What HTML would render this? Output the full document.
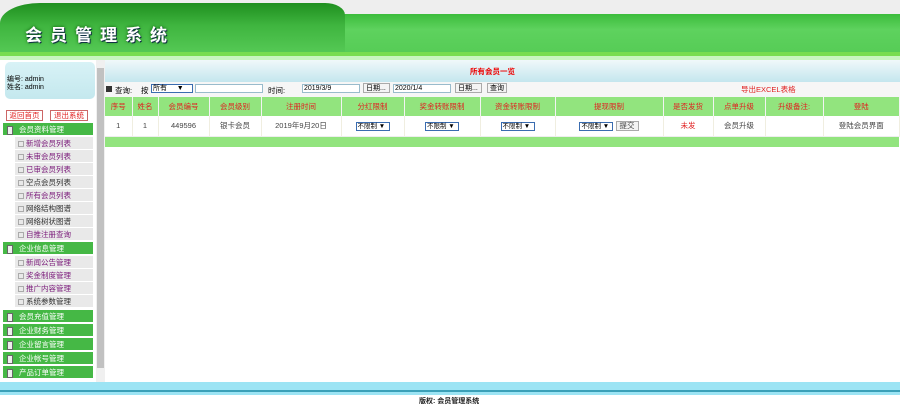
<!DOCTYPE html>
<html><head><meta charset="utf-8"><style>
*{margin:0;padding:0;box-sizing:border-box}
body{width:900px;height:405px;overflow:hidden;background:#fff;font-family:"Liberation Sans","Noto Sans CJK SC",sans-serif;font-size:8px;position:relative}
.abs{position:absolute}
#hdr{left:0;top:0;width:900px;height:60px;background:#eee}
#tab{left:0;top:3px;width:345px;height:50px;background:linear-gradient(180deg,#1f8f1f,#3fb53f 45%,#55c955);border-top-left-radius:40px 20px;border-top-right-radius:20px 12px}
#band{left:330px;top:14px;width:570px;height:39px;background:linear-gradient(180deg,#3cbc3c,#5ed25e 40%,#56cc56)}
#lime{left:0;top:52px;width:900px;height:4px;background:#78dd50}
#pale{left:0;top:56px;width:900px;height:4px;background:#c8f5c0}
#title{left:25px;top:21px;font-size:17px;font-weight:bold;color:#fff;letter-spacing:8px;text-shadow:1px 1px 0 #134,0 0 3px #050}
.side{left:0;top:60px;width:96px;height:322px;background:#fff}
#info{left:5px;top:62px;width:90px;height:37px;background:linear-gradient(180deg,#d8f2f6,#c4e8ee);border-radius:5px;font-size:7px;line-height:8px;padding-top:14px;padding-left:2px}
.btn{top:110px;height:11px;border:1px solid #c66;background:#fff;color:#e02020;font-size:7.5px;line-height:9px;text-align:center}
.g{left:3px;width:90px;height:13px;background:#45b845;color:#fff;font-size:7.5px;line-height:13px;padding-left:16px;border-bottom:1px solid #fff}
.g:before{content:"";position:absolute;left:4px;top:3px;width:4px;height:7px;background:#eee;border:1px solid #666}
.it{left:15px;width:78px;height:13px;background:#e9e9e9;color:#7a1a7a;font-size:7.5px;line-height:13px;padding-left:3px;border-bottom:1px solid #fff}
.it.k{color:#333}
.it:before{content:"";display:inline-block;width:4px;height:4px;border:1px solid #aaa;margin-right:2px;vertical-align:-1px}
#sb{left:96px;top:60px;width:9px;height:322px;background:#f0f0f0}
#sbt{left:97px;top:68px;width:7px;height:300px;background:#c1c1c1}
#ctop{left:105px;top:60px;width:795px;height:22px;background:linear-gradient(180deg,#f0f8fa,#c4e6ee)}
#ctitle{left:470px;top:66px;color:#e00;font-size:7.5px;font-weight:bold}
#tb{left:105px;top:82px;width:795px;height:15px;background:#f6f6f6;font-size:7.5px}
.inp{height:9px;border:1px solid #9bc;background:#fff;font-size:7px;line-height:8px;padding-left:1px}
.b2{height:10px;border:1px solid #aaa;background:#f4f4f4;font-size:7px;line-height:9px;padding-left:2px}
table{position:absolute;left:105px;top:97px;width:795px;border-collapse:collapse}
td{text-align:center;font-size:7.5px;border-right:1px solid #fff}
tr.h td{background:#92e47e;color:#e02020;height:19px;border-right:1px solid #f3f3f3}
tr.r td{height:20px;color:#444;border-right:1px solid #f0eee0;border-bottom:1px solid #eee}
tr.f td{background:#92e47e;height:11px}
.sel{display:inline-block;width:34px;height:9px;border:1px solid #3a6cb0;font-size:6.5px;line-height:7px;text-align:left;padding-left:1px;background:#fff;color:#000}
#foot{left:0;top:382px;width:900px;height:13px;background:#9ce4f4}
#fl{left:0;top:390px;width:900px;height:2px;background:#3aa0b8}
#ft{left:419px;top:396px;font-size:7px;font-weight:bold;color:#222}
</style></head><body>
<div id="hdr" class="abs"></div>
<div id="band" class="abs"></div>
<div id="tab" class="abs"></div>
<div id="lime" class="abs"></div><div id="pale" class="abs"></div>
<div id="title" class="abs">会员管理系统</div>
<div class="abs side"></div>
<div id="info" class="abs">编号: admin<br>姓名: admin</div>
<div class="abs btn" style="left:6px;width:37px">返回首页</div>
<div class="abs btn" style="left:50px;width:38px">退出系统</div>
<div class="abs g" style="top:123px">会员资料管理</div>
<div class="abs it" style="top:137px">新增会员列表</div>
<div class="abs it" style="top:150px">未审会员列表</div>
<div class="abs it" style="top:163px">已审会员列表</div>
<div class="abs it k" style="top:176px">空点会员列表</div>
<div class="abs it" style="top:189px">所有会员列表</div>
<div class="abs it k" style="top:202px">网络结构图谱</div>
<div class="abs it k" style="top:215px">网络树状图谱</div>
<div class="abs it" style="top:228px">自推注册查询</div>
<div class="abs g" style="top:242px">企业信息管理</div>
<div class="abs it" style="top:256px">新闻公告管理</div>
<div class="abs it" style="top:269px">奖金制度管理</div>
<div class="abs it" style="top:282px">推广内容管理</div>
<div class="abs it k" style="top:295px">系统参数管理</div>
<div class="abs g" style="top:310px">会员充值管理</div>
<div class="abs g" style="top:324px">企业财务管理</div>
<div class="abs g" style="top:338px">企业留言管理</div>
<div class="abs g" style="top:352px">企业帐号管理</div>
<div class="abs g" style="top:366px">产品订单管理</div>
<div id="sb" class="abs"></div><div id="sbt" class="abs"></div>
<div id="ctop" class="abs"></div>
<div id="ctitle" class="abs">所有会员一览</div>
<div id="tb" class="abs">
<div class="abs" style="left:1px;top:4px;width:6px;height:6px;background:#333"></div>
<div class="abs" style="left:10px;top:3px">查询:</div>
<div class="abs" style="left:36px;top:3px">按</div>
<div class="abs inp" style="left:46px;top:2px;width:42px;border-color:#3a6cb0">所有 &nbsp; &nbsp; ▼</div>
<div class="abs inp" style="left:90px;top:2px;width:68px"></div>
<div class="abs" style="left:163px;top:3px">时间:</div>
<div class="abs inp" style="left:197px;top:2px;width:58px">2019/3/9</div>
<div class="abs b2" style="left:258px;top:1px;width:27px">日期...</div>
<div class="abs inp" style="left:288px;top:2px;width:58px">2020/1/4</div>
<div class="abs b2" style="left:350px;top:1px;width:27px">日期...</div>
<div class="abs b2" style="left:382px;top:1px;width:20px">查询</div>
<div class="abs" style="left:636px;top:2px;color:#e02020">导出EXCEL表格</div>
</div>
<table>
<tr class="h"><td style="width:27px">序号</td><td style="width:26px">姓名</td><td style="width:51px">会员编号</td><td style="width:52px">会员级别</td><td style="width:80px">注册时间</td><td style="width:63px">分红限制</td><td style="width:76px">奖金转账限制</td><td style="width:75px">资金转账限制</td><td style="width:108px">提现限制</td><td style="width:50px">是否发货</td><td style="width:52px">点单升级</td><td style="width:58px">升级备注:</td><td>登陆</td></tr>
<tr class="r"><td>1</td><td>1</td><td>449596</td><td>银卡会员</td><td>2019年9月20日</td><td><span class="sel">不限制 ▼</span></td><td><span class="sel">不限制 ▼</span></td><td><span class="sel">不限制 ▼</span></td><td><span class="sel">不限制 ▼</span> <span style="display:inline-block;border:1px solid #aaa;background:#f4f4f4;padding:0 3px;height:10px;line-height:8px">提交</span></td><td style="color:#e02020">未发</td><td>会员升级</td><td></td><td>登陆会员界面</td></tr>
<tr class="f"><td colspan="13"></td></tr>
</table>
<div id="foot" class="abs"></div><div id="fl" class="abs"></div>
<div id="ft" class="abs">版权: 会员管理系统</div>
</body></html>
